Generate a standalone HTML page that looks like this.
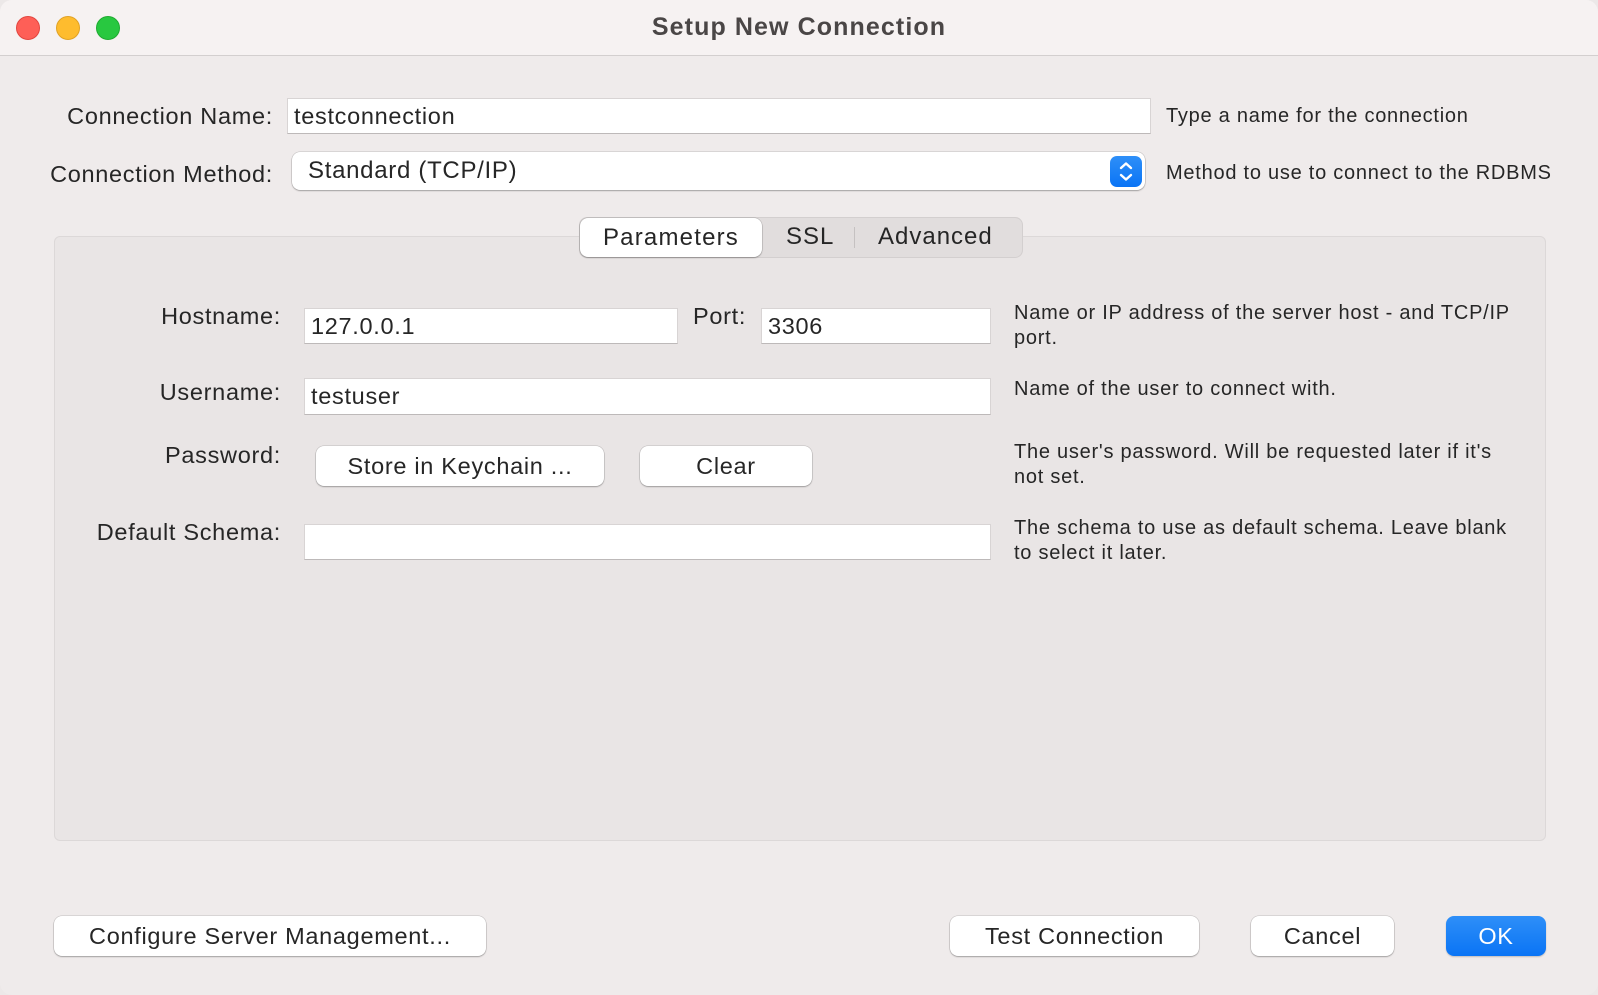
<!DOCTYPE html>
<html><head><meta charset="utf-8"><style>
*{box-sizing:border-box;margin:0;padding:0}
body{width:1598px;height:995px;background:#ece8e8;font-family:"Liberation Sans",Arial,sans-serif;color:#262626;position:relative;overflow:hidden;letter-spacing:0.7px}
.win{position:absolute;left:0;top:0;width:1598px;height:995px;background:#efebeb;border-radius:12px;overflow:hidden}
.tb{position:absolute;left:0;top:0;width:1598px;height:56px;background:#f6f2f2;border-bottom:1px solid #d3cfcf}
.dot{position:absolute;top:16px;width:24px;height:24px;border-radius:50%}
.t{position:absolute;white-space:nowrap}
.lab{position:absolute;font-size:23.5px;text-align:right;white-space:nowrap}
.help{position:absolute;font-size:20px;line-height:25px;color:#262626;letter-spacing:0.75px;white-space:nowrap}
.inp{position:absolute;background:#fff;border:1px solid #d8d4d4;border-bottom-color:#bdb9b9;font-size:23.5px;padding-left:6px;display:flex;align-items:center}
.btn{position:absolute;background:#fff;border-radius:8px;box-shadow:0 0 0 0.5px rgba(0,0,0,.18),0 1px 1.5px rgba(0,0,0,.25);font-size:23.5px;display:flex;align-items:center;justify-content:center}
</style></head><body>
<div class="win">
<div class="tb">
<div class="dot" style="left:16px;background:#fe5f57;border:1px solid #e2463f"></div>
<div class="dot" style="left:56px;background:#febc2e;border:1px solid #e1a224"></div>
<div class="dot" style="left:96px;background:#28c840;border:1px solid #1fab31"></div>
<div class="t" style="left:0;width:1598px;text-align:center;top:13px;font-size:25px;font-weight:bold;color:#4a4646;letter-spacing:1.1px">Setup New Connection</div>
</div>

<div class="lab" style="right:1325px;top:103px">Connection Name:</div>
<div class="inp" style="left:287px;top:98px;width:864px;height:36px">testconnection</div>
<div class="help" style="left:1166px;top:104px">Type a name for the connection</div>

<div class="lab" style="right:1325px;top:161px">Connection Method:</div>
<div class="btn" style="left:292px;top:152px;width:853px;height:38px;justify-content:flex-start;padding-left:16px;font-size:24px">Standard (TCP/IP)</div>
<div style="position:absolute;left:1110px;top:156px;width:32px;height:31px;border-radius:7px;background:linear-gradient(#2e8ff8,#0a74f5)">
<svg width="32" height="31" viewBox="0 0 32 31"><path d="M11 12 L16 7.5 L21 12 M11 19 L16 23.5 L21 19" fill="none" stroke="#fff" stroke-width="2.4" stroke-linecap="round" stroke-linejoin="round"/></svg></div>
<div class="help" style="left:1166px;top:161px">Method to use to connect to the RDBMS</div>

<div style="position:absolute;left:54px;top:236px;width:1492px;height:605px;background:#e9e5e5;border:1px solid #dcd8d8;border-radius:6px"></div>
<div style="position:absolute;left:579px;top:217px;width:444px;height:41px;background:#e1dddd;border:1px solid #d3cfcf;border-radius:8px"></div>
<div class="btn" style="left:580px;top:218px;width:182px;height:39px;font-size:24px;letter-spacing:1.2px">Parameters</div>
<div class="t" style="left:786px;top:223px;font-size:24px;letter-spacing:1px">SSL</div>
<div style="position:absolute;left:854px;top:227px;width:1px;height:21px;background:#c5c1c1"></div>
<div class="t" style="left:878px;top:223px;font-size:24px;letter-spacing:1px">Advanced</div>

<div class="lab" style="right:1317px;top:303px">Hostname:</div>
<div class="inp" style="left:304px;top:308px;width:374px;height:36px">127.0.0.1</div>
<div class="lab" style="left:693px;top:303px">Port:</div>
<div class="inp" style="left:761px;top:308px;width:230px;height:36px">3306</div>
<div class="help" style="left:1014px;top:301px">Name or IP address of the server host - and TCP/IP<br>port.</div>

<div class="lab" style="right:1317px;top:379px">Username:</div>
<div class="inp" style="left:304px;top:378px;width:687px;height:37px">testuser</div>
<div class="help" style="left:1014px;top:377px">Name of the user to connect with.</div>

<div class="lab" style="right:1317px;top:442px">Password:</div>
<div class="btn" style="left:316px;top:446px;width:288px;height:40px">Store in Keychain ...</div>
<div class="btn" style="left:640px;top:446px;width:172px;height:40px">Clear</div>
<div class="help" style="left:1014px;top:440px">The user's password. Will be requested later if it's<br>not set.</div>

<div class="lab" style="right:1317px;top:519px">Default Schema:</div>
<div class="inp" style="left:304px;top:524px;width:687px;height:36px"></div>
<div class="help" style="left:1014px;top:516px">The schema to use as default schema. Leave blank<br>to select it later.</div>

<div class="btn" style="left:54px;top:916px;width:432px;height:40px">Configure Server Management...</div>
<div class="btn" style="left:950px;top:916px;width:249px;height:40px">Test Connection</div>
<div class="btn" style="left:1251px;top:916px;width:143px;height:40px">Cancel</div>
<div class="btn" style="left:1446px;top:916px;width:100px;height:40px;background:linear-gradient(#2e8ff8,#0a74f5);color:#fff;box-shadow:0 1px 1.5px rgba(0,0,0,.2)">OK</div>
</div>
</body></html>
